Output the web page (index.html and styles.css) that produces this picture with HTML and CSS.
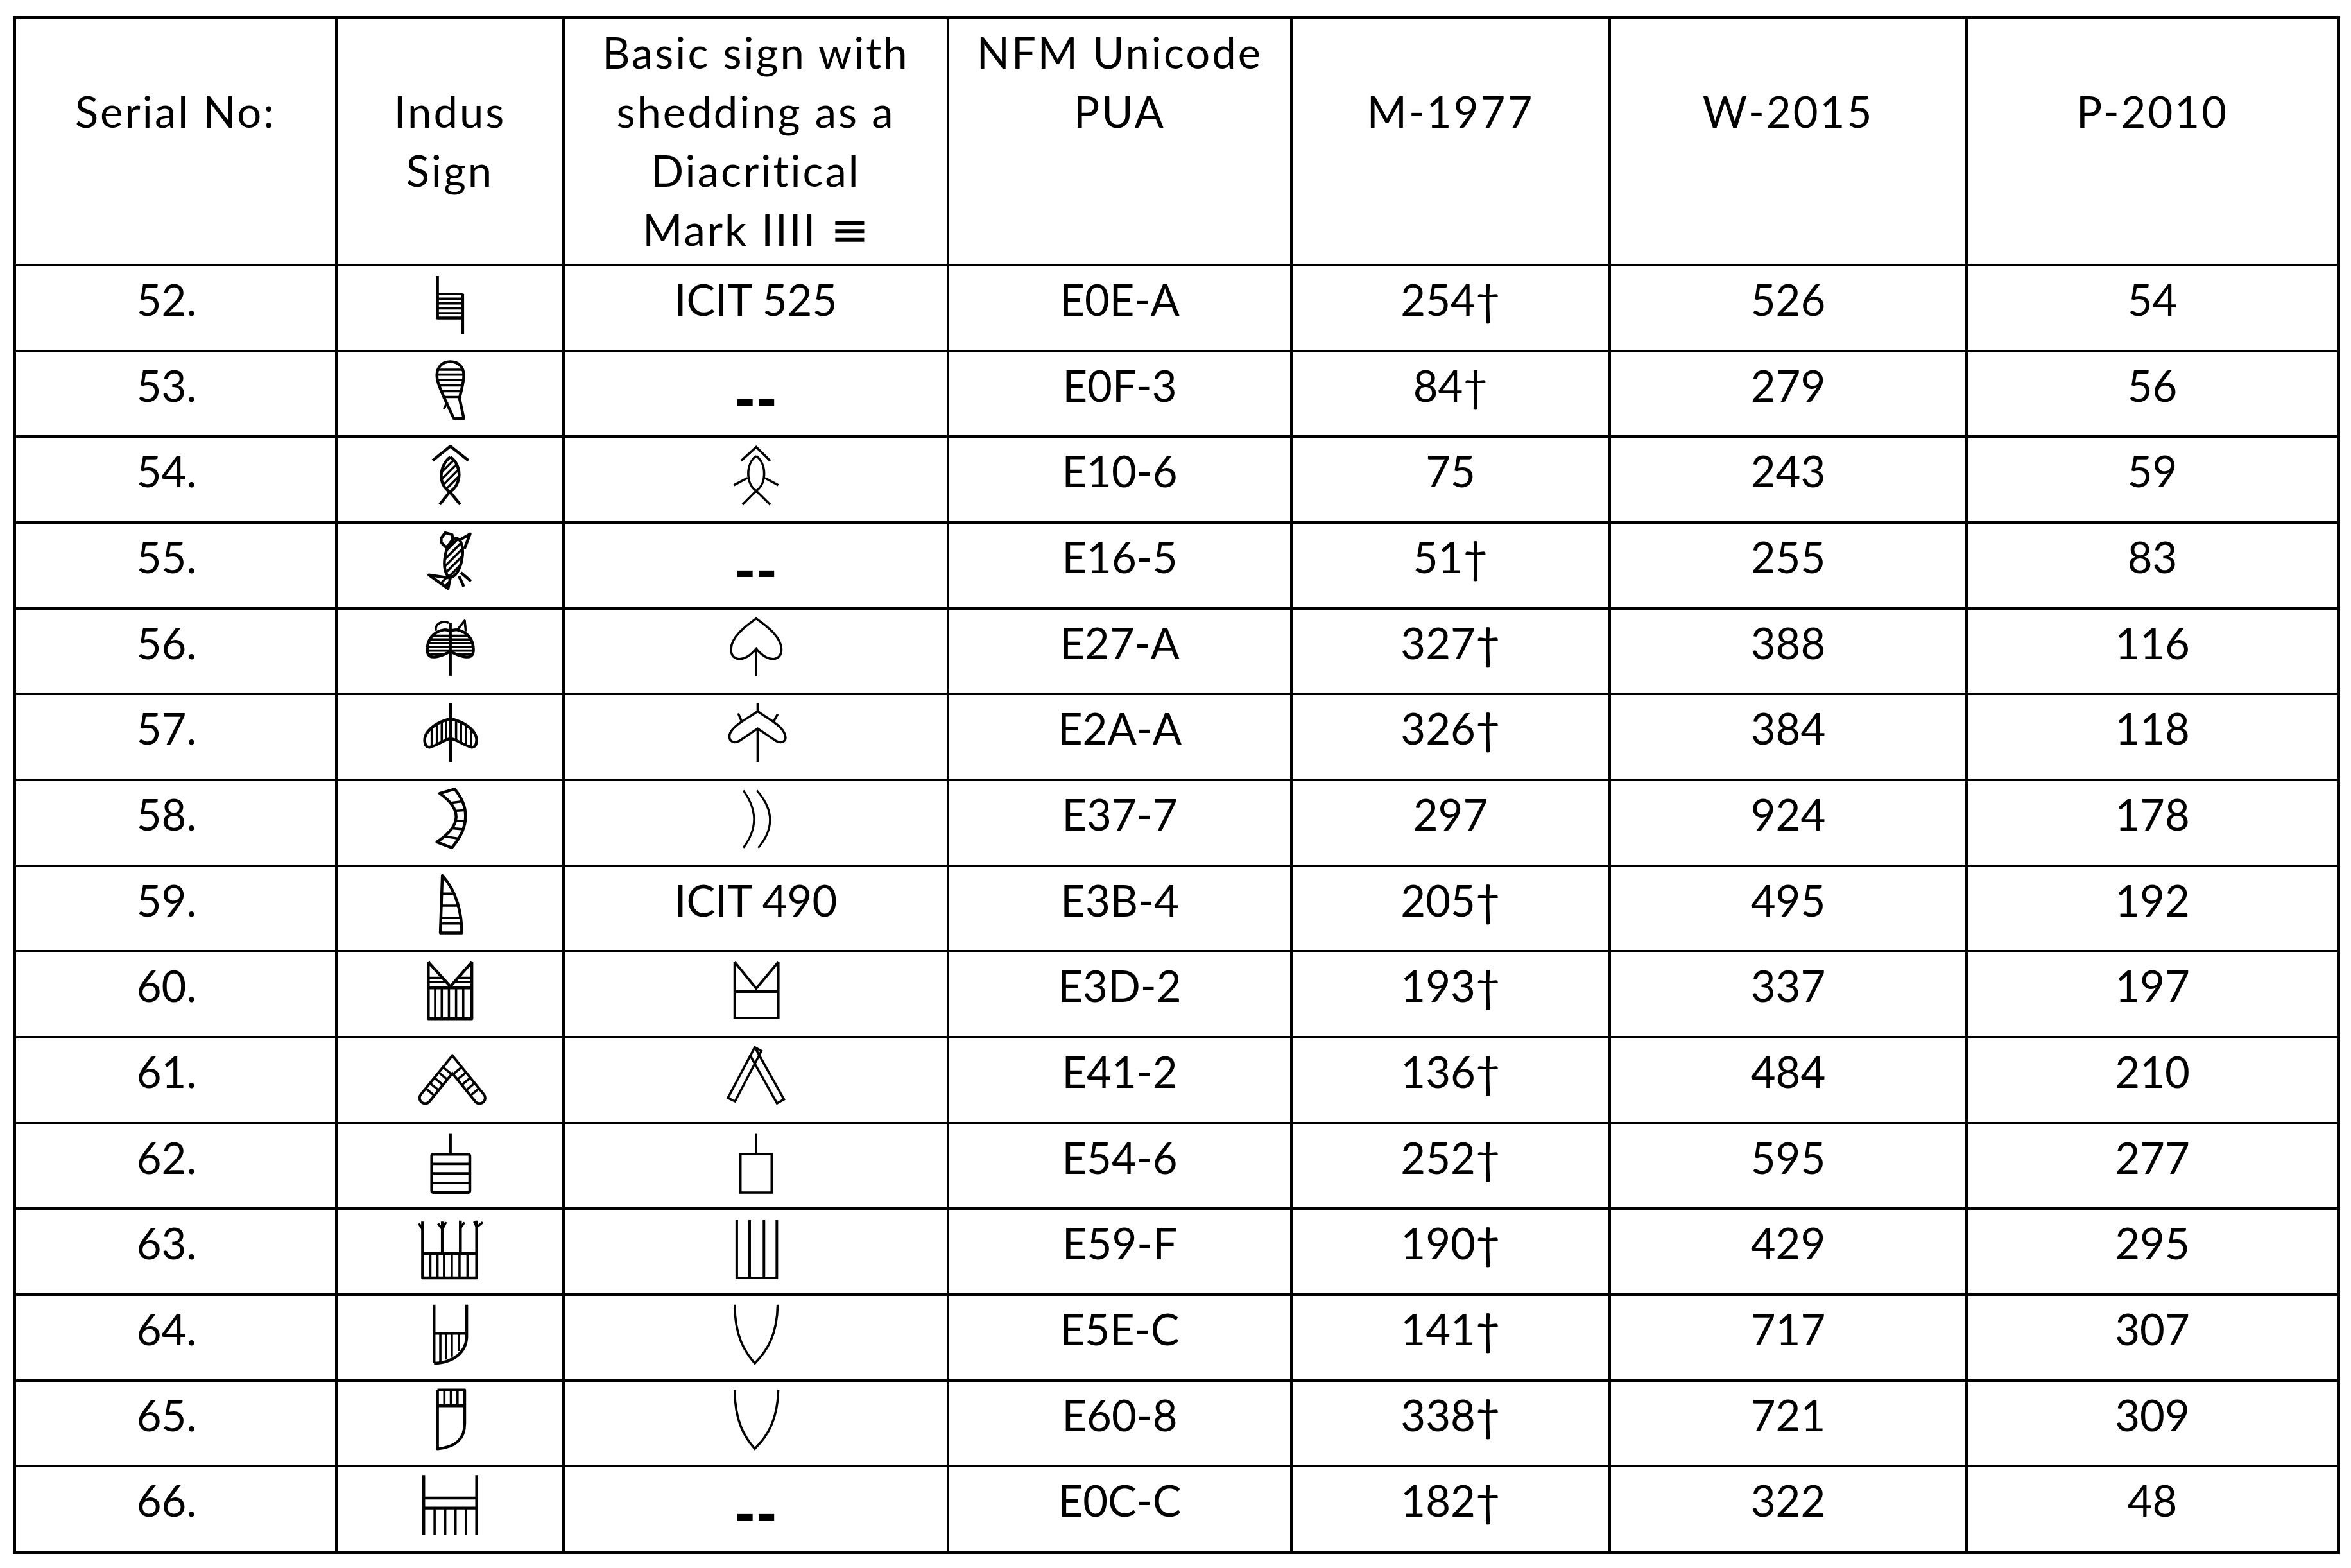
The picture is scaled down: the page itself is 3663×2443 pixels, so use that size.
FILE: index.html
```html
<!DOCTYPE html>
<html lang="en">
<head>
<meta charset="utf-8">
<title>Indus signs table</title>
<link rel="stylesheet" href="styles.css">
</head>
<body>
<div class="tbl">
  <div class="c hd h2">Serial No:</div>
  <div class="c hd h2">Indus<br>Sign</div>
  <div class="c hd">Basic sign with<br>shedding as a<br>Diacritical<br>Mark IIII <span class="eq">≡</span></div>
  <div class="c hd">NFM Unicode<br>PUA</div>
  <div class="c hd h2">M-1977</div>
  <div class="c hd h2">W-2015</div>
  <div class="c hd h2">P-2010</div>

  <!-- 52 -->
  <div class="c sn">52.</div>
  <div class="c ic-cell"><svg class="ic" viewBox="0 4.5 269 290"><path d="M91,38V185H179M179,100V240"/><path class="t" d="M91,100H179M91,117H179M91,134H179M91,151H179M91,168H179"/></svg></div>
  <div class="c">ICIT 525</div>
  <div class="c">E0E-A</div>
  <div class="c">254†</div>
  <div class="c">526</div>
  <div class="c">54</div>

  <!-- 53 -->
  <div class="c sn">53.</div>
  <div class="c ic-cell"><svg class="ic" viewBox="0 4.5 269 290"><path d="M136,37C108,37 89,55 89,85C89,108 100,128 114,162L148,235H183L168,165C176,128 183,108 183,85C183,55 164,37 136,37Z"/><path class="t" d="M92,65H180M90,82H182M92,100H180M97,120H176M104,140H172M112,160H168M126,178L113,202"/></svg></div>
  <div class="c"><span class="dash">--</span></div>
  <div class="c">E0F-3</div>
  <div class="c">84†</div>
  <div class="c">279</div>
  <div class="c">56</div>

  <!-- 54 -->
  <div class="c sn">54.</div>
  <div class="c ic-cell"><svg class="ic" viewBox="0 4.5 269 290"><defs><clipPath id="c54"><path d="M136,72C96,100 92,170 134,193C176,170 178,100 136,72Z"/></clipPath></defs><path d="M74,84L136,34L199,84M136,72C96,100 92,170 134,193L170,237M136,72C178,100 176,170 134,193L99,237"/><g clip-path="url(#c54)"><path class="t" d="M80,150L200,30M80,175L200,55M80,200L200,80M80,225L200,105"/></g></svg></div>
  <div class="c ic-cell"><svg class="ic d" viewBox="0 4.5 269 290"><path d="M82,85L135,37L184,85M135,68C98,95 98,165 135,190L184,238M135,68C172,95 172,165 135,190L87,238M57,170L104,145M166,145L212,170"/></svg></div>
  <div class="c">E10-6</div>
  <div class="c">75</div>
  <div class="c">243</div>
  <div class="c">59</div>

  <!-- 55 -->
  <div class="c sn">55.</div>
  <div class="c ic-cell"><svg class="ic" viewBox="0 4.5 269 290"><defs><clipPath id="c55a"><ellipse cx="147" cy="123" rx="30" ry="68" transform="rotate(10 147 123)"/></clipPath><clipPath id="c55b"><path d="M61,183L128,231L136,194Z"/></clipPath></defs><ellipse cx="147" cy="123" rx="30" ry="68" transform="rotate(10 147 123)"/><path d="M104,55L118,36L142,42L146,70L120,86L104,70Z"/><path d="M166,63L205,40L185,92"/><path d="M61,183L128,231L136,194Z"/><path d="M173,175L208,205M166,187L183,224"/><g clip-path="url(#c55a)"><path class="t" d="M60,160L200,20M60,185L200,45M60,210L200,70M60,235L200,95M60,260L200,120M60,285L200,145"/></g><g clip-path="url(#c55b)"><path class="t" d="M100,190L140,150M100,215L150,165M100,240L150,190"/></g></svg></div>
  <div class="c"><span class="dash">--</span></div>
  <div class="c">E16-5</div>
  <div class="c">51†</div>
  <div class="c">255</div>
  <div class="c">83</div>

  <!-- 56 -->
  <div class="c sn">56.</div>
  <div class="c ic-cell"><svg class="ic" viewBox="0 4.5 269 290"><defs><clipPath id="c56"><path d="M136,80C110,62 60,90 56,135C52,170 70,172 90,168C110,165 125,155 136,150C147,155 162,165 182,168C202,172 220,170 216,135C212,90 162,62 136,80Z"/></clipPath></defs><path d="M136,49V235"/><path d="M136,80C110,62 60,90 56,135C52,170 70,172 90,168C110,165 125,155 136,150C147,155 162,165 182,168C202,172 220,170 216,135C212,90 162,62 136,80Z"/><g clip-path="url(#c56)"><path class="t" d="M50,95H222M50,108H222M50,121H222M50,134H222M50,147H222M50,160H222"/></g><path class="t" d="M85,78C82,55 105,40 130,50M160,75L186,42L190,80"/></svg></div>
  <div class="c ic-cell"><svg class="ic d" viewBox="0 4.5 269 290"><path d="M135,35C100,60 45,100 47,145C48,185 95,190 135,140C175,190 222,185 223,145C225,100 170,60 135,35ZM135,140V237"/></svg></div>
  <div class="c">E27-A</div>
  <div class="c">327†</div>
  <div class="c">388</div>
  <div class="c">116</div>

  <!-- 57 -->
  <div class="c sn">57.</div>
  <div class="c ic-cell"><svg class="ic" viewBox="0 4.5 269 290"><defs><clipPath id="c57"><path d="M137,88C110,92 70,110 52,140C42,158 45,190 65,186C90,180 115,160 137,156ZM137,88C164,92 204,110 222,140C232,158 229,190 209,186C184,180 159,160 137,156Z"/></clipPath></defs><path d="M137,33V238"/><path d="M137,88C110,92 70,110 52,140C42,158 45,190 65,186C90,180 115,160 137,156ZM137,88C164,92 204,110 222,140C232,158 229,190 209,186C184,180 159,160 137,156Z"/><g clip-path="url(#c57)"><path class="t" d="M71,80V200M89,80V200M106,80V200M121,80V200M156,80V200M173,80V200M191,80V200M209,80V200"/></g></svg></div>
  <div class="c ic-cell"><svg class="ic d" viewBox="0 4.5 269 290"><path d="M140,61C115,80 50,110 42,143C38,165 55,175 75,165L140,121L205,165C225,175 242,165 236,145C228,110 165,80 140,61ZM140,33V61M140,121V238M72,68L85,98M210,71L194,100"/></svg></div>
  <div class="c">E2A-A</div>
  <div class="c">326†</div>
  <div class="c">384</div>
  <div class="c">118</div>

  <!-- 58 -->
  <div class="c sn">58.</div>
  <div class="c ic-cell"><svg class="ic" viewBox="0 4.5 269 290"><defs><clipPath id="c58"><path d="M99,47L151,32Q232,130 141,237L89,217Q218,132 99,47Z"/></clipPath></defs><path d="M99,47L151,32Q232,130 141,237L89,217Q218,132 99,47Z"/><g clip-path="url(#c58)"><path class="t" d="M100,85L230,68M100,112L230,103M100,142L230,145M100,165L230,177M80,192L230,215"/></g></svg></div>
  <div class="c ic-cell"><svg class="ic d" viewBox="0 4.5 269 290"><path class="th" d="M90,37Q165,137 90,237M137,37Q227,137 142,237"/></svg></div>
  <div class="c">E37-7</div>
  <div class="c">297</div>
  <div class="c">924</div>
  <div class="c">178</div>

  <!-- 59 -->
  <div class="c sn">59.</div>
  <div class="c ic-cell"><svg class="ic" viewBox="0 4.5 269 290"><defs><clipPath id="c59"><path d="M108,34L101,234H176C176,170 160,90 108,34Z"/></clipPath></defs><path d="M108,34L101,234H176C176,170 160,90 108,34Z"/><g clip-path="url(#c59)"><path class="t" d="M95,97H190M95,139H190M95,182H190M95,201H190"/></g></svg></div>
  <div class="c">ICIT 490</div>
  <div class="c">E3B-4</div>
  <div class="c">205†</div>
  <div class="c">495</div>
  <div class="c">192</div>

  <!-- 60 -->
  <div class="c sn">60.</div>
  <div class="c ic-cell"><svg class="ic" viewBox="0 4.5 269 290"><path d="M59,38V236H211V38M59,38L136,123L211,38M59,128H211"/><path class="t" d="M59,93H109M163,93H211M59,108H122M150,108H211M83,128V236M106,128V236M131,128V236M156,128V236M181,128V236"/></svg></div>
  <div class="c ic-cell"><svg class="ic d" viewBox="0 4.5 269 290"><path class="m" d="M60,38V233H212V38M60,38L135,130L212,38M60,141H212"/></svg></div>
  <div class="c">E3D-2</div>
  <div class="c">193†</div>
  <div class="c">337</div>
  <div class="c">197</div>

  <!-- 61 -->
  <div class="c sn">61.</div>
  <div class="c ic-cell"><svg class="ic" viewBox="0 4.5 269 290"><path class="band" d="M48,212L143,95L238,212"/><path class="bandw" d="M48,212L143,95L238,212"/><path class="t" d="M113,106.6L137.8,126.8M97.8,125.3L122.6,145.5M82.7,143.9L107.5,164.1M67.6,162.5L92.4,182.7M52.5,181.1L77.3,201.3M173,106.6L148.2,126.8M188.2,125.3L163.4,145.5M203.3,143.9L178.5,164.1M218.4,162.5L193.6,182.7M233.5,181.1L208.7,201.3"/></svg></div>
  <div class="c ic-cell"><svg class="ic d" viewBox="0 4.5 269 290"><path d="M36,212L130,35L153,48L61,224ZM130,35L232,217L207.6,231L112,60"/></svg></div>
  <div class="c">E41-2</div>
  <div class="c">136†</div>
  <div class="c">484</div>
  <div class="c">210</div>

  <!-- 62 -->
  <div class="c sn">62.</div>
  <div class="c ic-cell"><svg class="ic" viewBox="0 4.5 269 290"><path d="M136,37V108"/><rect x="71" y="108" width="133" height="134" rx="6"/><path class="t" d="M71,142H204M71,175H204M71,208H204"/></svg></div>
  <div class="c ic-cell"><svg class="ic d" viewBox="0 4.5 269 290"><path d="M135,37V108"/><rect x="80" y="108" width="109" height="134"/></svg></div>
  <div class="c">E54-6</div>
  <div class="c">252†</div>
  <div class="c">595</div>
  <div class="c">277</div>

  <!-- 63 -->
  <div class="c sn">63.</div>
  <div class="c ic-cell"><svg class="ic" viewBox="0 4.5 269 290"><path d="M39,157H228V242H39ZM39,45V157M108,45V157M171,42V157M228,42V157"/><path class="t" d="M66,157V242M91,157V242M114,157V242M141,157V242M168,157V242M196,157V242M26,52L39,72M93,52L108,72L121,47M171,68L185,48M219,45L228,65L249,48"/></svg></div>
  <div class="c ic-cell"><svg class="ic d" viewBox="0 4.5 269 290"><path class="m" d="M67,40V242H207V40M112,40V242M162,40V242"/></svg></div>
  <div class="c">E59-F</div>
  <div class="c">190†</div>
  <div class="c">429</div>
  <div class="c">295</div>

  <!-- 64 -->
  <div class="c sn">64.</div>
  <div class="c ic-cell"><svg class="ic" viewBox="0 4.5 269 290"><path d="M79,35V240M193,35V150C190,200 150,238 79,240M79,135H193"/><path class="t" d="M101,135V234M121,135V227M141,135V217M166,135V197"/></svg></div>
  <div class="c ic-cell"><svg class="ic d" viewBox="0 4.5 269 290"><path d="M60,35C60,145 95,200 130,240C170,200 208,145 210,35"/></svg></div>
  <div class="c">E5E-C</div>
  <div class="c">141†</div>
  <div class="c">717</div>
  <div class="c">307</div>

  <!-- 65 -->
  <div class="c sn">65.</div>
  <div class="c ic-cell"><svg class="ic" viewBox="0 4.5 269 290"><path d="M91,33V238C160,232 186,200 186,150V33H91M91,88H186"/><path class="t" d="M115,33V88M138,33V88M161,33V88"/></svg></div>
  <div class="c ic-cell"><svg class="ic d" viewBox="0 4.5 269 290"><path d="M60,33C60,143 95,198 130,238C170,198 210,143 212,33"/></svg></div>
  <div class="c">E60-8</div>
  <div class="c">338†</div>
  <div class="c">721</div>
  <div class="c">309</div>

  <!-- 66 -->
  <div class="c sn">66.</div>
  <div class="c ic-cell"><svg class="ic" viewBox="0 4.5 269 290"><path d="M43,32V242M228,32V242M43,112H228M43,147H228"/><path class="t" d="M81,147V242M118,147V242M154,147V242M191,147V242"/></svg></div>
  <div class="c"><span class="dash">--</span></div>
  <div class="c">E0C-C</div>
  <div class="c">182†</div>
  <div class="c">322</div>
  <div class="c">48</div>
</div>
</body>
</html>
```

FILE: styles.css
```css
body {
  margin: 0;
  background: #fff;
}

.tbl {
  display: grid;
  grid-template-columns: 497px 350px 595px 531px 492px 552px 575px;
  grid-template-rows: 381px;
  grid-auto-rows: 129.67px;
  gap: 4px;
  padding: 5px;
  width: max-content;
  margin: 25px 0 0 20px;
  background: #000;
  font-family: Lato, "DejaVu Sans", sans-serif;
  font-size: 67px;
  line-height: 92px;
  color: #000;
}

.c {
  background: #fff;
  text-align: center;
  white-space: nowrap;
  padding-top: 5px;
  overflow: hidden;
}

.hd {
  letter-spacing: 3px;
}

.h2 {
  padding-top: 97px;
}

.sn {
  padding-right: 28px;
}

.eq {
  font-family: "DejaVu Sans", sans-serif;
  font-size: 72px;
  letter-spacing: 0;
}

.dash {
  font-weight: 900;
  font-size: 90px;
  vertical-align: -28px;
}

.ic-cell {
  display: flex;
  justify-content: center;
  padding-top: 0;
}

.ic {
  display: block;
  width: 120px;
  height: 129.5px;
}

.ic path,
.ic ellipse,
.ic rect {
  fill: none;
  stroke: #000;
  stroke-width: 10px;
  stroke-linejoin: round;
}

.ic .t {
  stroke-width: 8px;
}

.ic.d path,
.ic.d rect {
  stroke-width: 8px;
  stroke-linejoin: miter;
}

.ic.d .th {
  stroke-width: 7px;
}

.ic.d .m {
  stroke-width: 9px;
}

.ic .band {
  stroke-width: 48px;
  stroke-linecap: round;
  stroke-linejoin: miter;
}

.ic .bandw {
  stroke: #fff;
  stroke-width: 30px;
  stroke-linecap: round;
  stroke-linejoin: miter;
}
```
